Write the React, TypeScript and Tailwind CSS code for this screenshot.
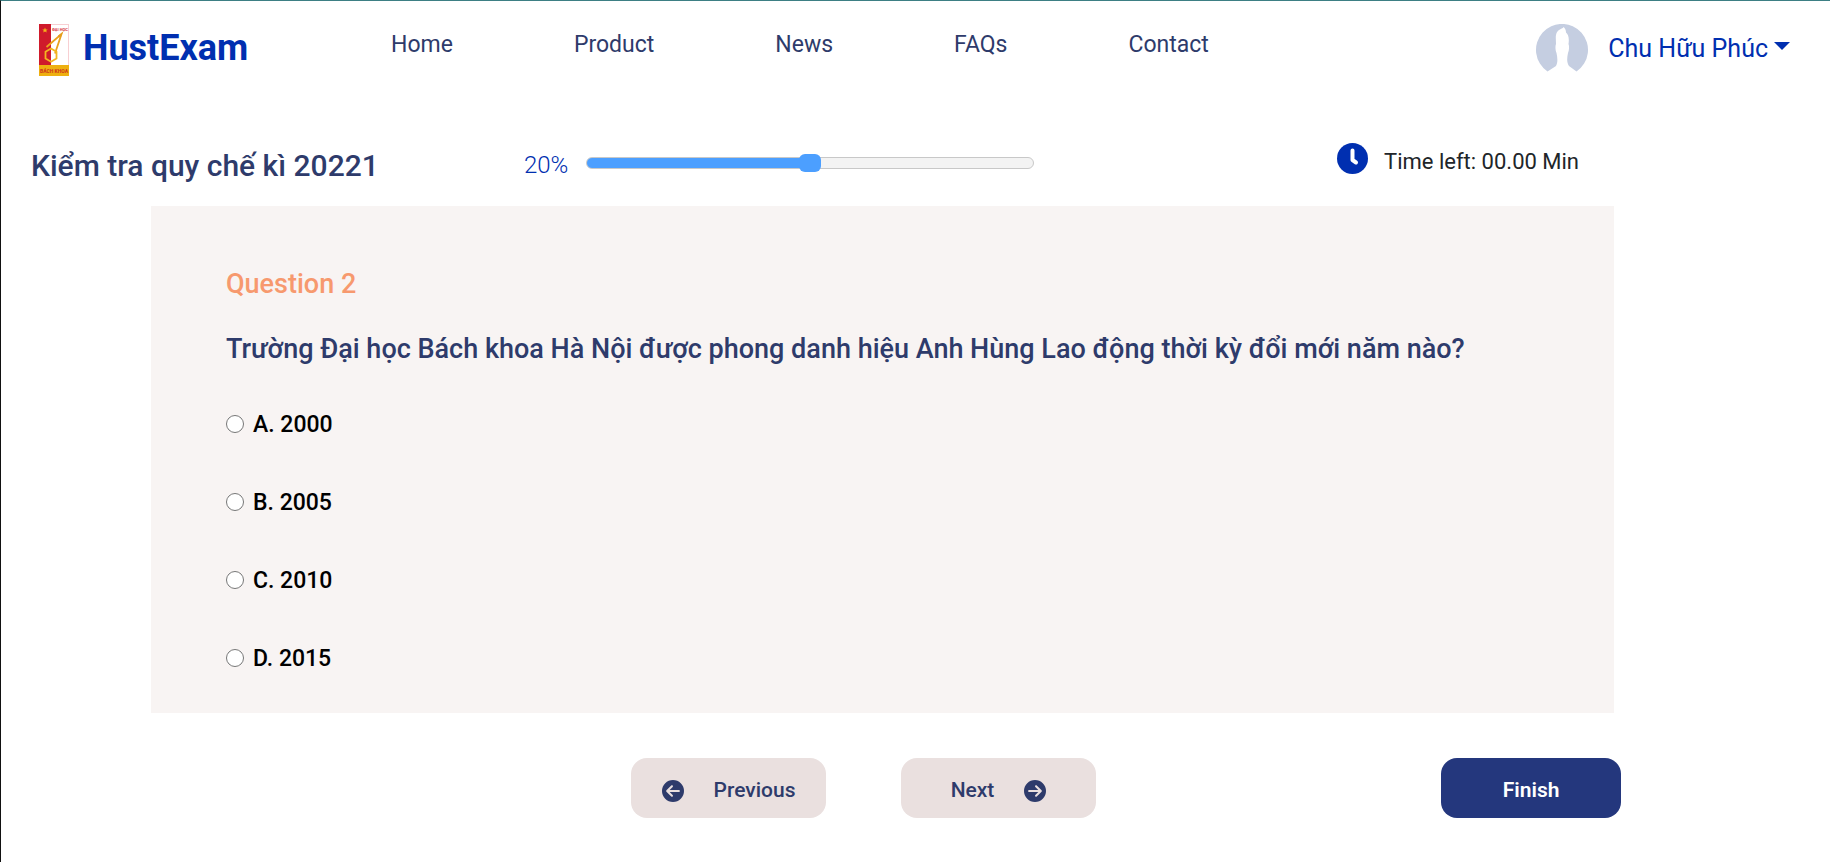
import { FaCircleArrowLeft, FaCircleArrowRight } from "react-icons/fa6";

const links = ["Home", "Product", "News", "FAQs", "Contact"];
const answers = ["A. 2000", "B. 2005", "C. 2010", "D. 2015"];

function Logo() {
  return (
    <svg viewBox="0 0 30 52" className="h-[52px] w-[30px] shrink-0" aria-hidden="true">
      <rect width="30" height="52" fill="#fff" />
      <rect x="0.5" y="0.5" width="29" height="45" fill="none" stroke="#f8cfd2" />
      <rect width="12" height="42" fill="#cf1a2b" />
      <path d="M6 3.6l.8 1.8 1.9.1-1.5 1.2.6 1.9L6 7.5 4.2 8.6l.6-1.9-1.5-1.2 1.9-.1z" fill="#f6b21b" />
      <text x="21" y="6.5" fontSize="4" fontWeight="800" fill="#d8404c" textAnchor="middle">
        ĐẠI HỌC
      </text>
      <path d="M7.5 23L22.5 10 16 29.5" fill="none" stroke="#e9a21c" strokeWidth="1.8" />
      <path d="M23.8 8l-5 3.8 2.8 2.2z" fill="#e59c20" />
      <path d="M12 24.5l5.5 3.2v6.8L12 37.8l-5.5-3.3v-6.8z" fill="none" stroke="#f3b620" strokeWidth="1.8" />
      <rect y="41" width="30" height="11" fill="#eeb010" />
      <text x="15" y="48.5" fontSize="5" fontWeight="800" fill="#cf3a1c" textAnchor="middle">
        BÁCH KHOA
      </text>
    </svg>
  );
}

function Avatar() {
  return (
    <svg viewBox="0 0 52 52" className="size-[52px] shrink-0" aria-hidden="true">
      <path
        d="M11.5 47.5A26 26 0 1 1 40.5 47.5L33 42C30.5 38 31 34 32 29C33 27 33.5 22 32.5 20C33.5 14 32 10 30 8.5C30 6 29 4 27.5 3C27 5 21 5 20 11C19.5 13 20 17 20 20C19 22 19.5 27 20.5 29C21.5 34 22 38 20 42Z"
        fill="#c5cee1"
      />
    </svg>
  );
}

function Clock() {
  return (
    <svg viewBox="0 0 31 31" className="size-[31px] shrink-0" aria-hidden="true">
      <circle cx="15.5" cy="15.5" r="15.5" fill="#002fb0" />
      <path d="M15.5 7.5V17L19 19.5" fill="none" stroke="#fff" strokeWidth="4" strokeLinecap="round" strokeLinejoin="round" />
    </svg>
  );
}

export default function App() {
  return (
    <div className="min-h-screen border-t border-l border-t-[#3d7f84] border-l-[#111] bg-white font-['Roboto',sans-serif] text-[#2e3b6b]">
      <header className="flex items-start pt-[23px] pr-10 pl-[38px]">
        <a href="#" className="flex w-[352px] shrink-0 items-start gap-3.5 text-4xl leading-[48px] font-bold text-[#002fb0]">
          <Logo />
          <span className="leading-[48px]">HustExam</span>
        </a>
        <nav className="flex gap-[121px] text-[23px] leading-[42px]">
          {links.map((l) => (
            <a key={l} href="#">
              {l}
            </a>
          ))}
        </nav>
        <button type="button" className="ml-auto flex items-start gap-5 text-[25px] leading-[50px] text-[#002fb0]">
          <Avatar />
          <span className="flex items-center gap-1.5 whitespace-nowrap">
            Chu Hữu Phúc
            <span className="mb-1.5 border-x-8 border-t-8 border-x-transparent border-t-[#002fb0]" />
          </span>
        </button>
      </header>

      <section className="grid h-[130px] grid-cols-[27.4%_45.2%_1fr] items-start pt-[67px] pl-[30px]">
        <h1 className="text-[30px] leading-[46px] font-medium whitespace-nowrap">Kiểm tra quy chế kì 20221</h1>
        <div className="flex h-10 items-center gap-[18px]">
          <label htmlFor="progress" className="pt-1 text-2xl leading-10 font-light text-[#002fb0]">
            20%
          </label>
          <input
            id="progress"
            type="range"
            defaultValue={50}
            className="h-3 w-[448px] appearance-none rounded-full border border-[#c8c8c8] bg-[linear-gradient(to_right,#4c9fff_50%,#f3f3f3_50%)] [&::-webkit-slider-thumb]:h-[18px] [&::-webkit-slider-thumb]:w-[22px] [&::-webkit-slider-thumb]:appearance-none [&::-webkit-slider-thumb]:rounded-md [&::-webkit-slider-thumb]:bg-[#4c9fff]"
          />
        </div>
        <p className="flex items-start gap-4 text-[22px] leading-[38px] whitespace-nowrap text-[#212529]">
          <Clock />
          Time left: 00.00 Min
        </p>
      </section>

      <main className="ml-[150px] w-4/5 bg-[#f8f4f3] px-[75px] pt-[60px] pb-4">
        <h2 className="text-[27px] leading-9 font-medium text-[#f7996e]">Question 2</h2>
        <fieldset>
          <legend className="pt-[29px] text-[27px] leading-9 font-medium">
            Trường Đại học Bách khoa Hà Nội được phong danh hiệu Anh Hùng Lao động thời kỳ đổi mới năm nào?
          </legend>
          <div className="flex flex-col pt-[18px]">
            {answers.map((a) => (
              <label key={a} className="flex h-[78px] items-center gap-[9px] text-[23px] font-medium text-black">
                <input type="radio" name="answer" className="size-[18px]" />
                <span className="pt-0.5">{a}</span>
              </label>
            ))}
          </div>
        </fieldset>
      </main>

      <footer className="ml-[150px] flex w-4/5 pt-[45px] text-[21px] font-medium">
        <button type="button" className="ml-[480px] flex h-[60px] w-[195px] shrink-0 items-center justify-center gap-[30px] rounded-2xl bg-[#eae0df] pt-1.5">
          <FaCircleArrowLeft className="size-[22px]" />
          Previous
        </button>
        <button type="button" className="ml-[75px] flex h-[60px] w-[195px] shrink-0 items-center justify-center gap-[30px] rounded-2xl bg-[#eae0df] pt-1.5">
          Next
          <FaCircleArrowRight className="size-[22px]" />
        </button>
        <button type="button" className="-mr-[7px] ml-auto h-[60px] w-[180px] shrink-0 rounded-2xl bg-[#24377d] pt-1.5 font-semibold text-white">
          Finish
        </button>
      </footer>
    </div>
  );
}
